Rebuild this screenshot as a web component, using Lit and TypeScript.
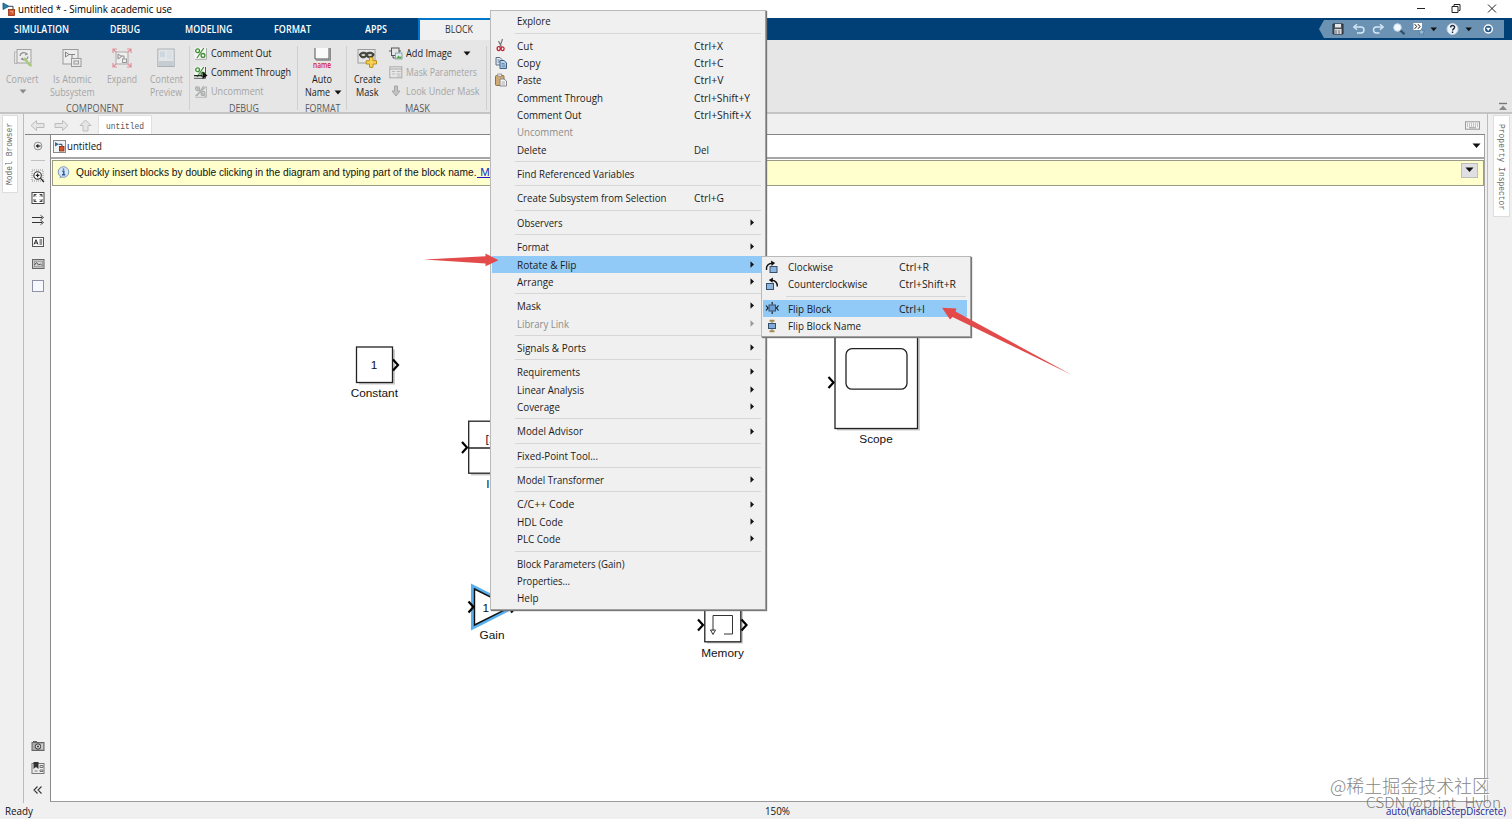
import { LitElement, html, svg, css, nothing } from "lit";
import { customElement, property } from "lit/decorators.js";

/** A single line of text condensed or widened along its reading direction to `w` pixels. */
@customElement("fit-text")
class FitText extends LitElement {
  @property() text = "";
  @property({ type: Number }) w = 0;
  @property({ type: Boolean, reflect: true }) link = false;
  static styles = css`
    :host { display: inline-block; white-space: pre; vertical-align: top; }
    span { display: inline-block; transform-origin: 0 0; vertical-align: top; }
    :host([link]) span { text-decoration: underline; }
  `;
  render() {
    return html`<span>${this.text}</span>`;
  }
  updated() {
    const el = this.renderRoot.querySelector("span")!;
    const vertical = getComputedStyle(this).writingMode !== "horizontal-tb";
    el.style.transform = "";
    const natural = vertical ? el.offsetHeight : el.getBoundingClientRect().width;
    if (!this.w || !natural) return;
    const k = (this.w / natural).toFixed(4);
    el.style.transform = vertical ? `scaleY(${k})` : `scaleX(${k})`;
    this.style.inlineSize = `${this.w}px`;
  }
}

const t = (text: string, w: number, link = false) => html`<fit-text .text=${text} .w=${w} ?link=${link}></fit-text>`;

const icon = (w: number, h: number, body: unknown) =>
  html`<svg width=${w} height=${h} viewBox="0 0 ${w} ${h}" fill="none">${body}</svg>`;

const chevron = (color = "#111") =>
  icon(8, 5, svg`<path d="M.6.5h6.8L4 4.4z" fill=${color} />`);

const appIcon = svg`<path d="M1 1l6 3.300L1 7.500z" fill="#2a7fb0" stroke="#174f74" stroke-width=".8"/><path d="M7 4.300h4V8" stroke="#345" stroke-width="1"/><rect x="6.500" y="7.500" width="6" height="6" fill="#d4552b" stroke="#8d2f12" stroke-width=".8"/><path d="M8.300 9.500h2.500v2" stroke="#f4b08c" stroke-width=".8"/>`;

const convertIcon = icon(20, 20, svg`
  <path d="M4 15.500H1.500V4M1.500 4h2" stroke="#b5b5b5"/><rect x="4" y="1.500" width="14" height="13.500" stroke="#a2a2a2" fill="#ececec"/>
  <path d="M7 8a4 4 0 0 1 7-2l-2 1M15 8.500a4 4 0 0 1-6.500 2.500l1.500-1" stroke="#8f8f8f" stroke-width="1.300"/>
  <path d="M11 10l5 6 2.500 2" stroke="#a9c97e" stroke-width="2.600"/>`);
const atomicIcon = icon(20, 20, svg`
  <rect x="1" y="1.500" width="15" height="14.500" stroke="#9a9a9a" fill="#ededed"/><path d="M3.500 4v5L7 6.500zM7 6.500h6M10 6.500v4" stroke="#858585"/>
  <rect x="9.500" y="10.500" width="9.500" height="8" fill="#e9e9e9" stroke="#9a9a9a"/><rect x="12" y="13" width="4.500" height="3" stroke="#9a9a9a"/>`);
const expandIcon = icon(20, 20, svg`
  <rect x="4" y="4" width="12" height="12" stroke="#b1a6a6" fill="#eee"/><path d="M6 6v5l3.500-2.500zM9 8h3v3" stroke="#8c8c8c"/><rect x="10.500" y="11" width="4" height="3.500" stroke="#999"/>
  <path d="M1 5V1h4M1 1l3 3M15 1h4v4M19 1l-3 3M1 15v4h4M1 19l3-3M19 15v4h-4M19 19l-3-3" stroke="#e2919b" stroke-width="1.200"/>`);
const previewIcon = icon(18, 20, svg`
  <rect x=".8" y="1" width="16.400" height="17.500" stroke="#aeb1b4" fill="#e2e5e8"/><rect x="3" y="3.500" width="5" height="5.500" fill="#cfd7de"/><rect x="10" y="3" width="5" height="8" fill="#d8e0e6"/><path d="M1.500 13h15v5h-15z" fill="#c5ccd2"/>`);
const autoIcon = icon(18, 13, svg`<path d="M2 0v11h14V0" fill="#fafafa" stroke="#555"/><path d="M3 12h14.300V0" stroke="#888" stroke-width="1.300"/>`);
const maskIcon = icon(21, 20, svg`
  <rect x="1" y="1.500" width="17" height="13.500" fill="#e8e8e8" stroke="#9c9c9c"/>
  <path d="M2.500 6C5 3.500 8 4 9.500 5 11.500 4 15 3.500 17 6c0 4-5 5-7.500 2.500C7 11 2.500 10 2.500 6z" fill="#4b4b3c" stroke="#222" stroke-width=".8"/>
  <ellipse cx="6.300" cy="7" rx="2" ry="1.100" fill="#ddd"/><ellipse cx="13" cy="7" rx="2" ry="1.100" fill="#ddd"/>
  <path d="M12.500 9.500h3.500v3.200h3.500v3.300H16v3.300h-3.500V16H9.200v-3.300h3.300z" fill="#f7d252" stroke="#b98d1c"/>`);

const pct = (color: string) => svg`<circle cx="3.600" cy="3.700" r="1.900" stroke=${color} stroke-width="1.300"/><circle cx="9" cy="8.400" r="1.900" stroke=${color} stroke-width="1.300"/><path d="M9.800 1L3 11" stroke=${color} stroke-width="1.200"/>`;
const commentOut = icon(14, 13, svg`<path d="M.5.500h12v12H.5z" fill="#f2f5f1"/><path d="M1 12.300h11.500V1" stroke="#aaa"/>${pct("#3f8f36")}`);
const commentThrough = icon(14, 13, svg`<path d="M.5.500h12v12H.5z" fill="#f2f5f1"/><path d="M0 12.300h11.500V1" stroke="#555"/>${pct("#3f8f36")}<path d="M0 9.700h8" stroke="#111" stroke-width="1.200"/><path d="M8.500 5.500l5 3.900-5 3.600z" fill="#111"/>`);
const uncomment = icon(14, 13, svg`<path d="M1 12.300h11.500V1" stroke="#bbb"/>${pct("#a9adad")}<path d="M1.500 1.500l10 10M11.500 2l-10 9" stroke="#b3b3b3" stroke-width="1.400"/>`);
const addImage = icon(14, 13, svg`<rect x="2.500" y="1" width="7.500" height="7.500" stroke="#555"/><path d="M0 4h2.500M10 4h2M4 8.500V11h2" stroke="#555"/><rect x="6.500" y="6" width="6.500" height="6" fill="#dceaf2" stroke="#8aa"/><path d="M7 11.500l2.500-3 1.500 1.500 1.500-1v2.500z" fill="#55a845"/>`);
const maskParams = icon(14, 13, svg`<rect x=".8" y=".8" width="12" height="11" stroke="#aaa"/><path d="M1 3h12" stroke="#aaa"/><path d="M3 5.500h3M3 8h3M7.500 5.500h4M7.500 8h4M8 10h3.500" stroke="#bbb"/>`);
const lookUnder = icon(14, 13, svg`<path d="M5.500 1h3v5H11L7 11 3 6h2.500z" fill="#c2c2c2" stroke="#a4a4a4"/>`);

const arrowShape = svg`<path d="M1 6L6.500 1v3H14v4H6.500v3z" fill="#e6e6e6" stroke="#bcbcbc"/>`;

const railIcons = {
  back: icon(14, 14, svg`<circle cx="7" cy="7" r="3.900" stroke="#777" stroke-width=".8"/><path d="M9.500 7H5.500" stroke="#222" stroke-width="1.200"/><path d="M7.300 4.800L4.700 7l2.600 2.200z" fill="#222"/>`),
  zoom: icon(14, 14, svg`<rect x="1" y="1" width="11" height="11" stroke="#777" stroke-width=".8" stroke-dasharray="1 1"/><circle cx="6.600" cy="6.400" r="3.700" fill="#fff" stroke="#333" stroke-width="1.100"/><path d="M4.800 6.400h3.600M6.600 4.600v3.600M9.400 9.200L13 13" stroke="#222" stroke-width="1.200"/>`),
  fit: icon(14, 14, svg`<rect x="1" y="1.500" width="12" height="11" fill="#fff" stroke="#444"/><path d="M3 6V3.500h2.500M3.200 3.700L5 5.500M8.500 3.500H11V6M10.800 3.700L9 5.500M3 8v2.500h2.500M3.200 10.300L5 8.500M11 8v2.500H8.500M10.800 10.300L9 8.500" stroke="#333" stroke-width=".9"/>`),
  signal: icon(14, 14, svg`<path d="M1 4.500h10M1 9.500h10" stroke="#333"/><path d="M9.500 2.300l3 2.200-3 2.200M9.500 7.300l3 2.200-3 2.200" stroke="#333" stroke-width=".9"/>`),
  note: icon(14, 14, svg`<rect x="1.500" y="2.500" width="11" height="9" fill="#fff" stroke="#555"/><path d="M3 9.500L5 4.700l2 4.800M3.700 8h2.600M8.500 5h2.700M8.500 7h2.700M8.500 9h2.700" stroke="#222" stroke-width=".95"/>`),
  image: icon(14, 14, svg`<rect x="1.500" y="2.500" width="11.500" height="9" fill="#ccc" stroke="#666"/><rect x="3.300" y="4.200" width="8" height="5.600" fill="#d2d2d2" stroke="#888" stroke-width=".7"/><path d="M3.500 8l2-2.500 2 2.500 2-1 1.500 1.500" stroke="#555"/>`),
  area: icon(14, 14, svg`<rect x="1.500" y="1.500" width="11" height="11" fill="#f7f8fd" stroke="#8d92a8"/>`),
  camera: icon(14, 14, svg`<rect x="1" y="3.500" width="12" height="8" fill="#aaa" stroke="#666"/><path d="M2 2.500h4" stroke="#666"/><circle cx="7" cy="7.500" r="2.700" fill="#ddd" stroke="#333"/><circle cx="7" cy="7.500" r="1" fill="#333"/><path d="M11 5v5" stroke="#eee"/>`),
  book: icon(14, 14, svg`<rect x="1" y="2.500" width="12" height="10" fill="#eee" stroke="#777"/><path d="M2.500 1h5v7L5 6 2.500 8z" fill="#333"/><path d="M9 4.500h3v2H9zM9 9h3v1.500H9zM3.500 10h3" stroke="#777"/>`),
  collapse: icon(14, 14, svg`<path d="M6.500 3.500L3 7l3.500 3.500M10.500 3.500L7 7l3.500 3.500" stroke="#333" stroke-width="1.100"/>`),
};

const menuIcons: Record<string, unknown> = {
  cut: icon(14, 14, svg`<path d="M8.500 1L6 8.500M4.500 3l3 6" stroke="#777" stroke-width="1.200"/><ellipse cx="4.700" cy="10.600" rx="1.600" ry="2" stroke="#c8202f" stroke-width="1.300"/><ellipse cx="8.600" cy="10.800" rx="1.500" ry="1.900" stroke="#c8202f" stroke-width="1.300"/>`),
  copy: icon(14, 14, svg`<path d="M2 1.500h4l2 2V9H2z" fill="#dfe8f0" stroke="#5d6f80"/><path d="M3.500 4h2M3.500 6h3" stroke="#5d7f9f"/><path d="M6 4.500h4.200L12.500 7v5.500H6z" fill="#b9d3ea" stroke="#3f5f80"/><path d="M7.500 7.500h3M7.500 9h4M7.500 10.700h4" stroke="#4d79a5" stroke-width=".8"/>`),
  paste: icon(14, 14, svg`<rect x="1.500" y="2.500" width="8.500" height="10" rx="1" fill="#cfaa72" stroke="#8d7047"/><rect x="3.700" y="1" width="4" height="2.500" fill="#ddd" stroke="#888" stroke-width=".7"/><path d="M6 6h4l2.500 2v5H6z" fill="#f6f6f6" stroke="#888"/><path d="M7.500 9h3.500M7.500 11h3.500" stroke="#999" stroke-width=".8"/>`),
  cw: icon(14, 14, svg`<rect x="5" y="6.500" width="7" height="6" fill="#8fb6dc" stroke="#34506e"/><path d="M1.500 10C1 6 3 3.500 7 3.200" stroke="#111" stroke-width="1.400"/><path d="M6 .6l4.200 2.500L6.500 6z" fill="#111"/>`),
  ccw: icon(14, 14, svg`<rect x="1.500" y="6.500" width="7" height="6" fill="#8fb6dc" stroke="#34506e"/><path d="M12.300 9.500C12.500 6 10.500 3.700 7 3.200" stroke="#111" stroke-width="1.400"/><path d="M8 .6L3.800 3 7.500 5.700z" fill="#111"/>`),
  flip: icon(14, 14, svg`<rect x="4" y="4" width="6.500" height="6" fill="#6f9fd0" stroke="#34506e"/><path d="M7.200 1v2.500M7.200 10.500V13" stroke="#222" stroke-width="1.200"/><path d="M1 4.500L3 7 1 9.500M13.500 4.500L11.500 7l2 2.500" stroke="#111" stroke-width="1.200"/>`),
  name: icon(14, 14, svg`<rect x="3.500" y="4.500" width="7" height="5" fill="#7facd9" stroke="#34506e"/><path d="M4.500 1.800h5M4.500 12.200h5" stroke="#a58d50" stroke-width="2"/><path d="M7 2.500v2M7 9.500v2" stroke="#776f55"/>`),
};

type Item = { label: string; w: number; key?: string; kw?: number; icon?: string; sub?: boolean; off?: boolean; on?: boolean };
const SEP = null;
const i = (label: string, w: number, extra: Partial<Item> = {}): Item => ({ label, w, ...extra });
const sub = { sub: true };

const MENU: (Item | null)[] = [
  i("Explore", 33.5), SEP,
  i("Cut", 16, { key: "Ctrl+X", kw: 29, icon: "cut" }),
  i("Copy", 23.5, { key: "Ctrl+C", kw: 29.5, icon: "copy" }),
  i("Paste", 24.5, { key: "Ctrl+V", kw: 29.5, icon: "paste" }),
  i("Comment Through", 86, { key: "Ctrl+Shift+Y", kw: 56 }),
  i("Comment Out", 64.5, { key: "Ctrl+Shift+X", kw: 57 }),
  i("Uncomment", 56, { off: true }),
  i("Delete", 29.5, { key: "Del", kw: 15 }), SEP,
  i("Find Referenced Variables", 117.5), SEP,
  i("Create Subsystem from Selection", 149.5, { key: "Ctrl+G", kw: 30 }), SEP,
  i("Observers", 45.5, sub), SEP,
  i("Format", 32, sub),
  i("Rotate & Flip", 59.5, { sub: true, on: true }),
  i("Arrange", 36.5, sub), SEP,
  i("Mask", 24, sub),
  i("Library Link", 52, { sub: true, off: true }), SEP,
  i("Signals & Ports", 69, sub), SEP,
  i("Requirements", 63, sub),
  i("Linear Analysis", 67, sub),
  i("Coverage", 43, sub), SEP,
  i("Model Advisor", 66, sub), SEP,
  i("Fixed-Point Tool...", 81), SEP,
  i("Model Transformer", 87, sub), SEP,
  i("C/C++ Code", 57.5, sub),
  i("HDL Code", 46, sub),
  i("PLC Code", 43.5, sub), SEP,
  i("Block Parameters (Gain)", 107.5),
  i("Properties...", 53),
  i("Help", 21.5),
];
const SUBMENU: (Item | null)[] = [
  i("Clockwise", 45, { key: "Ctrl+R", kw: 30, icon: "cw" }),
  i("Counterclockwise", 79.5, { key: "Ctrl+Shift+R", kw: 57, icon: "ccw" }), SEP,
  i("Flip Block", 43.5, { key: "Ctrl+I", kw: 26, icon: "flip", on: true }),
  i("Flip Block Name", 73, { icon: "name" }),
];

@customElement("context-menu")
class ContextMenu extends LitElement {
  @property({ attribute: false }) items: (Item | null)[] = [];
  static styles = css`
    :host { display: block; box-sizing: border-box; background: #f0f0f0; border: 1px solid #b9b9b9; border-right-color: #a0a0a0; border-bottom-color: #a0a0a0; box-shadow: 1px 1px 1px #777; padding: 1.200px 3px 1px 1px; color: #1b1b1b; font: 10.800px/17.370px "Open Sans", "Noto Sans", sans-serif; }
    .row { display: grid; grid-template-columns: 25px var(--label-col, 176.500px) 1fr 12px; height: 17.370px; align-items: center; }
    .row svg { display: block; }
    .glyph { padding-left: 1px; }
    .glyph svg { margin-left: 1px; }
    .off { color: #8d8d8d; }
    .on { background: #91c9f7; }
    .sep { height: 7px; display: flex; align-items: center; padding: 0 1px 0 23px; }
    .line { height: 1px; flex: 1; background: #d7d7d7; }
  `;
  render() {
    return this.items.map((m) => m === null
      ? html`<div class="sep"><div class="line"></div></div>`
      : html`<div class="row ${m.off ? "off" : ""} ${m.on ? "on" : ""}">
          <div class="glyph">${m.icon ? menuIcons[m.icon] : nothing}</div>
          <div>${t(m.label, m.w)}</div>
          <div>${m.key ? t(m.key, m.kw!) : nothing}</div>
          <div>${m.sub ? icon(5, 7, svg`<path d="M.5.200L4 3.500.500 6.800z" fill=${m.off ? "#999" : "#111"}/>`) : nothing}</div>
        </div>`);
  }
}

@customElement("app-root")
class AppRoot extends LitElement {
  static styles = css`
    :host { display: flex; flex-direction: column; position: relative; width: 1512px; height: 819px; overflow: hidden; background: #f0f0f0; color: #1b1b1b; font: 10.500px/12px "Open Sans", "Noto Sans", sans-serif; }
    svg { display: block; flex: none; }
    .title { height: 18px; background: #fff; display: flex; align-items: center; padding: 0 14px 0 2px; font-size: 10.800px; color: #000; }
    .title .name { margin-left: 2px; }
    .spacer { flex: 1; }
    .controls { display: flex; gap: 25px; padding-bottom: 2px; }
    .tabs { height: 22px; background: #004076; display: flex; align-items: stretch; color: #fff; font-size: 10.200px; font-weight: 600; padding-right: 8px; }
    .tab { display: flex; justify-content: center; align-items: center; }
    .w83 { width: 83px; } .w84 { width: 84px; }
    .tab.active { box-sizing: border-box; width: 84px; border-top: 2px solid #0076c8; border-left: 2px solid #0076c8; background: #f0f0f0; color: #333; font-weight: 400; padding: 0 4px 2px 0; }
    .qat { align-self: center; height: 18px; width: 185px; box-sizing: border-box; background: #6c92b3; clip-path: polygon(0 50%, 5px 0, 100% 0, 100% 100%, 5px 100%); display: flex; align-items: center; padding-left: 12px; }
    .ribbon { height: 72px; background: #e6e6e6; border-bottom: 2px solid #c4c4c4; display: flex; }
    .section { display: flex; flex-direction: column; box-sizing: border-box; background: linear-gradient(#cfcfcf, #cfcfcf) right 6px / 1px 64px no-repeat; }
    .section .body { height: 62px; flex: none; display: flex; }
    .section .cap { text-align: center; font-size: 10px; line-height: 12px; color: #5a5a5a; }
    .component { width: 190px; } .debug { width: 108px; } .format { width: 49px; } .mask { width: 140px; }
    .big { display: flex; flex-direction: column; align-items: center; padding-top: 8px; gap: 5px; box-sizing: border-box; }
    .big .txt { display: flex; flex-direction: column; align-items: center; line-height: 12.700px; }
    .big .picture { height: 20px; display: flex; flex-direction: column; align-items: center; }
    .disabled { color: #a5a5a5; }
    .section.component .body { display: grid; grid-template-columns: 45px 54px 45px 44px; }
    .down { height: 12px; display: flex; align-items: center; }
    .list { display: flex; flex-direction: column; padding: 3.500px 0 0 4px; }
    .create + .list { padding-left: 2px; }
    .list .item { display: flex; gap: 3px; align-items: center; height: 19px; }
    .inline { display: flex; align-items: center; gap: 4px; }
    .inline.wide { gap: 11px; }
    .auto { width: 48px; } .create { width: 40px; }
    .auto .inline { margin-left: 2px; }
    .redname { color: #d3202c; font: 600 9px/8px "Open Sans", sans-serif; }
    .ribbonend { flex: 1; display: flex; justify-content: flex-end; align-items: flex-end; padding: 0 4px 1px 0; }
    .main { flex: 1; display: flex; min-height: 0; }
    .side { width: 24px; box-sizing: border-box; padding-top: 1px; border-right: 1px solid #bcbcbc; }
    .side.right { width: 25px; border-right: 0; border-left: 1px solid #bcbcbc; padding-left: 5px; }
    .vtab { width: 15.500px; background: #fff; border: 1px solid #ddd; box-sizing: border-box; writing-mode: vertical-rl; display: flex; align-items: center; justify-content: center; font: 9px/13px "Liberation Mono", monospace; color: #666; }
    .side .vtab { margin-left: 2px; padding-left: 2px; }
    .browser { height: 78px; } .browser fit-text { transform: rotate(180deg); }
    .side.right .vtab { height: 102px; margin-left: 0; justify-content: flex-start; padding: 8px 2px 0 0; width: 17px; }
    .work { flex: 1; display: flex; flex-direction: column; margin: 0 2px 0 1px; }
    .docs { height: 20px; display: flex; align-items: flex-end; border-bottom: 1px solid #858585; padding-right: 5px; }
    .nav { display: flex; gap: 9px; padding: 0 5px 2px 5px; }
    .nav svg { width: 15px; height: 13px; }
    .doc { height: 19px; width: 54px; background: #fff; border: 1px solid #e0e0e0; border-bottom: 0; box-sizing: border-box; display: flex; align-items: center; justify-content: center; font: 9.500px/12px "Liberation Mono", monospace; color: #555; padding-top: 3px; }
    .kbd { padding-bottom: 4px; }
    .cols { flex: 1; display: flex; min-height: 0; }
    .rail { width: 25px; display: flex; flex-direction: column; align-items: center; padding-top: 4px; box-sizing: border-box; }
    .rail > svg { margin-bottom: 8px; }
    .rail > svg:last-child { margin-bottom: 6px; }
    .rail .first { padding-bottom: 7px; border-bottom: 1px solid #c2c2c2; margin-bottom: 8px; }
    .editor { flex: 1; display: flex; flex-direction: column; border-left: 1px solid #8a8a8a; border-right: 1px solid #a5a5a5; border-bottom: 1px solid #9a9a9a; background: #fff; margin-bottom: 1px; }
    .path { height: 22px; display: flex; align-items: center; padding: 0 3px 0 2px; font-size: 11px; color: #111; gap: 1px; border-bottom: 2px solid #a6a6a6; }
    .notice { height: 26px; box-sizing: border-box; margin: 1px 0 0 1px; border: 1px solid #9a9a88; background: #ffffce; display: flex; align-items: center; font: 11px/14px "Liberation Sans", sans-serif; color: #111; padding: 0 5px 2px 4px; gap: 6px; }
    .notice a { color: #1a1acb; }
    .drop { width: 15px; height: 13px; border: 1px solid #bdbdbd; background: #dfdfe4; display: flex; align-items: center; justify-content: center; margin-bottom: 4px; }
    .canvas { flex: 1; width: 100%; min-height: 0; }
    .canvas text { font: 11.800px "Liberation Sans", sans-serif; fill: #111; }
    .status { height: 16.500px; display: grid; grid-template-columns: 760px 1fr auto; align-items: center; padding: 0 6px 0 5px; color: #111; font-size: 10.800px; }
    .solver { color: #1c1c9a; }
    .menu { position: absolute; left: 490px; top: 10px; width: 276px; height: 600px; }
    .submenu { position: absolute; left: 760.500px; top: 255.800px; width: 210.500px; height: 81px; --label-col: 111px; }
    .marks { position: absolute; inset: 0; pointer-events: none; }
    .wm { position: absolute; right: 22px; top: 774px; font: 300 17.800px/22px "Noto Sans CJK SC", sans-serif; color: #878787; text-shadow: 0 0 1px #fff, 1px 1px 0 #fff; }
    .wm2 { position: absolute; right: 11px; top: 792px; font: 300 14.500px/19px "Noto Sans CJK SC", sans-serif; color: rgba(95,95,95,.8); }
  `;

  port(x: number, y: number) {
    return svg`<path d="M${x} ${y - 5.5}l5 5.500-5 5.500" stroke="#000" stroke-width="2.200" fill="none"/>`;
  }

  render() {
    return html`
      <div class="title">
        ${icon(14, 15, appIcon)}<span class="name">${t("untitled * - Simulink academic use", 154)}</span>
        <span class="spacer"></span>
        <div class="controls">
          ${icon(12, 12, svg`<path d="M3 6.500h8" stroke="#222"/>`)}
          ${icon(10, 12, svg`<path d="M1 4.500h6v6H1zM3 4V2.500h6v6H7.500" stroke="#222"/>`)}
          ${icon(12, 12, svg`<path d="M2 2.500l8 8M10 2.500l-8 8" stroke="#222"/>`)}
        </div>
      </div>
      <div class="tabs">
        <div class="tab w83">${t("SIMULATION", 55)}</div>
        <div class="tab w84">${t("DEBUG", 30)}</div>
        <div class="tab w83">${t("MODELING", 47.5)}</div>
        <div class="tab w84">${t("FORMAT", 37)}</div>
        <div class="tab w84">${t("APPS", 22)}</div>
        <div class="tab active">${t("BLOCK", 28)}</div>
        <span class="spacer"></span>
        <div class="qat">${icon(172, 18, svg`
          <path d="M2 4h10v10H2z" fill="#4c5259" stroke="#262b30"/><path d="M4 4h6v3.500H4z" fill="#e4e8eb"/><path d="M3.500 9h7v5h-7z" fill="#d7dbdf"/><path d="M5 10v4M8 10v4" stroke="#666"/>
          <path d="M23.500 7h6.500a3 3 0 0 1 0 6h-4" stroke="#d3e9f7" stroke-width="1.400"/><path d="M26 4.200L22.800 7l3.200 2.800" stroke="#d3e9f7" stroke-width="1.400"/>
          <path d="M51.500 7h-6a3 3 0 0 0 0 6h3" stroke="#d3e9f7" stroke-width="1.400"/><path d="M49 4.200L52.200 7 49 9.800" stroke="#d3e9f7" stroke-width="1.400"/>
          <circle cx="66.500" cy="7.500" r="3.800" fill="#f1f8ff" stroke="#c4d8e9"/><path d="M69.500 10.500l4 3.800" stroke="#304b68" stroke-width="2.200"/>
          <rect x="82.500" y="3" width="8.500" height="7" fill="#fff"/><path d="M83.700 4.200l2 2.300-2 2.300M87 4.200l2 2.300-2 2.300" stroke="#111"/><path d="M90.500 8.500l1 2.500H94l-2 1.500.8 2.500-2.300-1.500-2.300 1.500.8-2.500-2-1.500h2.500z" fill="#9fc1dd" stroke="#52799c" stroke-width=".7"/>
          <path d="M99.500 7.500h6.400l-3.200 3.800z" fill="#111"/>
          <circle cx="121.500" cy="9" r="5.500" fill="#eef5fb" stroke="#c0d0dd"/><path d="M119.600 7.500c0-2.700 4-2.600 4-.2 0 1.500-2 1.700-2 3.200M121.500 11.600v1.300" stroke="#1c2b3c" stroke-width="1.400"/>
          <path d="M134.500 7.500h6.400l-3.200 3.800z" fill="#111"/>
          <circle cx="157.300" cy="9" r="4" fill="#1e5687" stroke="#fff" stroke-width="1.500"/><path d="M155 7.700h4.600l-2.300 3.300z" fill="#fff"/>`)}
        </div>
      </div>
      <div class="ribbon">
        <div class="section component">
          <div class="body disabled">
            <div class="big">${convertIcon}<div class="txt">${t("Convert", 32.5)}<div class="down">${chevron("#888")}</div></div></div>
            <div class="big">${atomicIcon}<div class="txt">${t("Is Atomic", 38.5)}${t("Subsystem", 44.5)}</div></div>
            <div class="big">${expandIcon}<div class="txt">${t("Expand", 30)}</div></div>
            <div class="big">${previewIcon}<div class="txt">${t("Content", 33)}${t("Preview", 32)}</div></div>
          </div>
          <div class="cap">${t("COMPONENT", 57.5)}</div>
        </div>
        <div class="section debug">
          <div class="body"><div class="list">
            <div class="item">${commentOut}${t("Comment Out", 60.5)}</div>
            <div class="item">${commentThrough}${t("Comment Through", 80)}</div>
            <div class="item disabled">${uncomment}${t("Uncomment", 52.5)}</div>
          </div></div>
          <div class="cap">${t("DEBUG", 30)}</div>
        </div>
        <div class="section format">
          <div class="body"><div class="big auto"><div class="picture">${autoIcon}<span class="redname">${t("name", 18)}</span></div>
            <div class="txt">${t("Auto", 20)}<span class="inline">${t("Name", 25)}${chevron()}</span></div></div></div>
          <div class="cap">${t("FORMAT", 35.5)}</div>
        </div>
        <div class="section mask">
          <div class="body">
            <div class="big create">${maskIcon}<div class="txt">${t("Create", 27)}${t("Mask", 22.5)}</div></div>
            <div class="list">
              <div class="item">${addImage}<span class="inline wide">${t("Add Image", 46)}${chevron()}</span></div>
              <div class="item disabled">${maskParams}${t("Mask Parameters", 71)}</div>
              <div class="item disabled">${lookUnder}${t("Look Under Mask", 73.5)}</div>
            </div>
          </div>
          <div class="cap">${t("MASK", 25)}</div>
        </div>
        <div class="ribbonend">${icon(10, 9, svg`<path d="M1 1.500h8" stroke="#777" stroke-width="1.400"/><path d="M5 3.500L9 8H1z" fill="#888"/>`)}</div>
      </div>
      <div class="main">
        <div class="side"><div class="vtab browser">${t("Model Browser", 62)}</div></div>
        <div class="work">
          <div class="docs">
            <div class="nav">
              ${icon(15, 12, arrowShape)}
              ${icon(15, 12, svg`<g transform="matrix(-1 0 0 1 15 0)">${arrowShape}</g>`)}
              ${icon(15, 13, svg`<path d="M7.500 1L13 6.500h-3V12H5V6.500H2z" fill="#e6e6e6" stroke="#bcbcbc"/>`)}
            </div>
            <div class="doc">${t("untitled", 38)}</div>
            <span class="spacer"></span>
            <div class="kbd">${icon(15, 9, svg`<rect x=".5" y=".8" width="14" height="7.400" fill="#f2f2f2" stroke="#999"/><path d="M2 3h11M2 5h11" stroke="#999" stroke-dasharray="1 1"/><path d="M4 6.800h7" stroke="#999"/>`)}</div>
          </div>
          <div class="cols">
            <div class="rail">
              <div class="first">${railIcons.back}</div>
              ${railIcons.zoom}${railIcons.fit}${railIcons.signal}${railIcons.note}${railIcons.image}${railIcons.area}
              <span class="spacer"></span>
              ${railIcons.camera}${railIcons.book}${railIcons.collapse}
            </div>
            <div class="editor">
              <div class="path">
                ${icon(13, 13, svg`<rect x=".5" y=".5" width="12" height="12" fill="#f2f4f6" stroke="#888"/><path d="M2 2l4 2.300L2 6.500z" fill="#2a6f9f"/><path d="M6 4.300h3V6" stroke="#345"/><rect x="6.500" y="6.500" width="4.500" height="4.500" fill="#d4552b" stroke="#7d2a10" stroke-width=".8"/>`)}
                ${t("untitled", 35)}<span class="spacer"></span>${icon(9, 6, svg`<path d="M.5.500h8l-4 4.500z" fill="#111"/>`)}
              </div>
              <div class="notice">
                ${icon(13, 13, svg`<path d="M3 9l-.5 3.500L6 10.500z" fill="#8aa5c4"/><circle cx="6.500" cy="6" r="5.300" fill="#d6e6f7" stroke="#7e97b5"/><path d="M5.300 5.200h1.500v3.500M5 8.800h3.200M6.500 2.500v1.300" stroke="#2556a0" stroke-width="1.400"/>`)}
                <span>${t("Quickly insert blocks by double clicking in the diagram and typing part of the block name.", 400.5)}<a>${t(" More information", 88, true)}</a></span>
                <span class="spacer"></span><div class="drop">${icon(9, 6, svg`<path d="M.5.500h8l-4 4.500z" fill="#111"/>`)}</div>
              </div>
              <svg class="canvas" fill="none">
               <g transform="translate(-51 -186.500)">
                <g fill="#b5b5b5"><path d="M359 383h36v2h-36zM393 350h2v33h-2zM471 474h40v2h-40zM707 642h36v2h-36zM741 608h2v34h-2zM837 429h83v2h-83zM918 339h2v90h-2z" opacity=".7"/></g>
                <g fill="#fff" stroke="#222" stroke-width="1.300">
                  <rect x="356.500" y="347.500" width="36" height="35.500"/>
                  <rect x="468.700" y="421.700" width="52" height="52"/><path d="M468.700 448.500h52"/>
                  <rect x="704.800" y="606" width="36" height="36.300"/>
                  <rect x="835" y="320" width="82.500" height="109"/><rect x="846" y="349.200" width="61" height="40.500" rx="6"/>
                </g>
                <path d="M473.700 588.500v38l37.500-19z" stroke="#58aeee" stroke-width="5.500"/>
                <path d="M474.500 589.500v36l36-18z" fill="#fff" stroke="#111" stroke-width="1.400"/>
                <path d="M713 631v-15h19.500v18.500H724M710.500 630.500h5l-2.500 4.500z" stroke="#333"/>
                ${this.port(393, 365.5)}${this.port(462, 448)}${this.port(468.5, 607.5)}${this.port(511, 607.5)}${this.port(698, 625.5)}${this.port(741.5, 625.5)}${this.port(828.5, 383)}
                <g text-anchor="middle">
                  <text x="374" y="369">1</text><text x="374.300" y="397">Constant</text>
                  <text x="485.800" y="612">1</text><text x="492" y="639.500">Gain</text>
                  <text x="722.500" y="657">Memory</text><text x="876" y="443.500">Scope</text>
                </g>
                <text x="485.500" y="443">[1]</text><text x="486.300" y="488">IC</text>
               </g>
              </svg>
            </div>
          </div>
        </div>
        <div class="side right"><div class="vtab">${t("Property Inspector", 86)}</div></div>
      </div>
      <div class="status"><span>${t("Ready", 28)}</span><span>${t("150%", 25)}</span><span class="solver">${t("auto(VariableStepDiscrete)", 120)}</span></div>
      <context-menu class="menu" .items=${MENU}></context-menu>
      <context-menu class="submenu" .items=${SUBMENU}></context-menu>
      <svg class="marks" width="1512" height="819" fill="#e34b4b">
        <path d="M424 259.400L485.500 256.300V253.500L498.500 260.300 485.500 266.300V263.500z"/>
        <path d="M942 307.700L956.500 308.500 955.500 311.500 1072 375 952.500 317 950 319.500z"/>
      </svg>
      <div class="wm">${t("@稀土掘金技术社区", 160)}</div>
      <div class="wm2">${t("CSDN @print_Hyon", 135)}</div>
    `;
  }
}
